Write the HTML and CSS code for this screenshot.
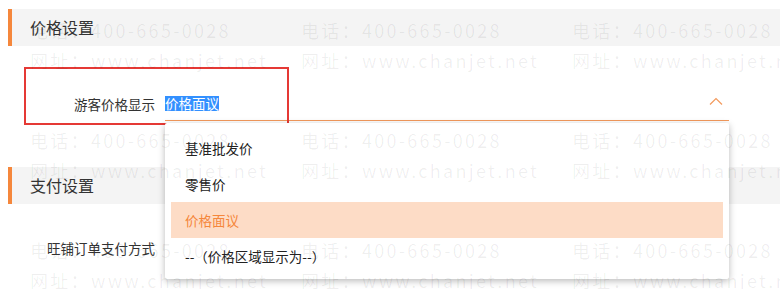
FILE: index.html
```html
<!DOCTYPE html>
<html lang="zh-CN">
<head>
<meta charset="utf-8">
<title>价格设置</title>
<link rel="stylesheet" href="styles.css">
</head>
<body>
<div class="page">
  <div class="section-header">价格设置</div>
  <div class="form-row row-price">
    <div class="label">游客价格显示</div>
    <div class="select">
      <span class="value"><span class="selected-text">价格面议</span></span>
      <svg class="chevron" width="14" height="8" viewBox="0 0 14 8"><polyline points="1,7.5 7,1.5 13,7.5" fill="none" stroke="#f39a5d" stroke-width="1.2"/></svg>
      <ul class="dropdown">
        <li class="option">基准批发价</li>
        <li class="option">零售价</li>
        <li class="option active">价格面议</li>
        <li class="option">--（价格区域显示为--）</li>
      </ul>
    </div>
  </div>
  <div class="section-header section-pay">支付设置</div>
  <div class="form-row row-pay">
    <div class="label">旺铺订单支付方式</div>
  </div>
  <div class="annotation"></div>
</div>
<div class="watermark">
  <div class="wm"><span>电话：400-665-0028</span><span>网址：www.chanjet.net</span></div>
  <div class="wm"><span>电话：400-665-0028</span><span>网址：www.chanjet.net</span></div>
  <div class="wm"><span>电话：400-665-0028</span><span>网址：www.chanjet.net</span></div>
  <div class="wm"><span>电话：400-665-0028</span><span>网址：www.chanjet.net</span></div>
  <div class="wm"><span>电话：400-665-0028</span><span>网址：www.chanjet.net</span></div>
  <div class="wm"><span>电话：400-665-0028</span><span>网址：www.chanjet.net</span></div>
  <div class="wm"><span>电话：400-665-0028</span><span>网址：www.chanjet.net</span></div>
  <div class="wm"><span>电话：400-665-0028</span><span>网址：www.chanjet.net</span></div>
  <div class="wm"><span>电话：400-665-0028</span><span>网址：www.chanjet.net</span></div>
</div>
</body>
</html>
```

FILE: styles.css
```css
* { box-sizing: border-box; }
html, body {
  margin: 0;
  padding: 0;
  background: #fff;
  overflow: hidden;
}
body {
  font-family: "Noto Sans CJK SC", "Liberation Sans", sans-serif;
  color: #333;
  width: 780px;
  height: 289px;
  position: relative;
}
.page {
  position: relative;
  padding: 9px 0 0 8px;
}
.section-header {
  height: 37px;
  line-height: 37px;
  background: #f4f4f4;
  border-left: 4px solid #f5873c;
  padding-left: 18px;
  font-size: 16px;
  color: #333;
}
.section-pay {
  margin-top: 46px;
}
.form-row {
  display: flex;
  align-items: center;
  gap: 10px;
  height: 34px;
}
.row-price {
  margin-top: 41px;
}
.row-pay {
  margin-top: 27px;
}
.label {
  width: 147px;
  text-align: right;
  font-size: 13.5px;
  color: #333;
}
.select {
  position: relative;
  width: 564px;
  height: 34px;
  border-bottom: 1px solid #f39a5d;
  display: flex;
  align-items: center;
  justify-content: space-between;
  padding-right: 6px;
}
.value {
  font-size: 13.5px;
  line-height: 15px;
}
.selected-text {
  background: #3390ff;
  color: #fff;
  display: inline-block;
  height: 15px;
  line-height: 15px;
}
.chevron {
  display: block;
  margin-top: -6px;
}
.dropdown {
  position: absolute;
  top: 36px;
  left: 0;
  width: 564px;
  margin: 0;
  padding: 7px 6px 5px;
  list-style: none;
  background: #fff;
  box-shadow: 0 2px 7px rgba(0, 0, 0, 0.28);
  border-radius: 2px;
  z-index: 5;
}
.option {
  height: 36px;
  line-height: 36px;
  padding-left: 14px;
  font-size: 13.5px;
  color: #222;
}
.option.active {
  background: #fddcc6;
  color: #f5873c;
}
.annotation {
  position: absolute;
  left: 24px;
  top: 67px;
  width: 265px;
  height: 58px;
  border: 2.5px solid #e53935;
  z-index: 4;
}
.watermark {
  position: absolute;
  left: 30px;
  top: 19px;
  display: grid;
  grid-template-columns: repeat(3, 271px);
  grid-auto-rows: 110px;
  pointer-events: none;
  z-index: 10;
}
.wm {
  display: flex;
  flex-direction: column;
}
.wm span {
  display: block;
  height: 30px;
  line-height: 22px;
  font-size: 18px;
  letter-spacing: 2.3px;
  color: rgba(0, 0, 0, 0.065);
  white-space: nowrap;
}
```
